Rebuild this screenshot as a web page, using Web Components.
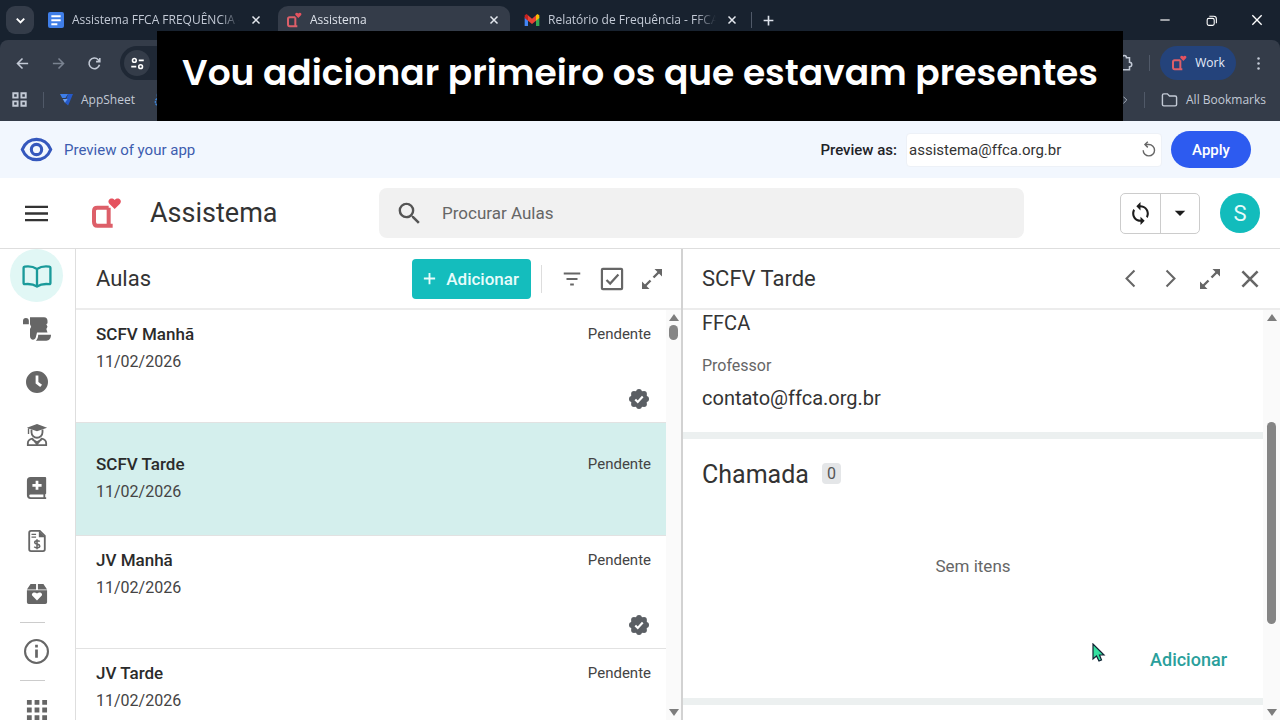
<!DOCTYPE html>
<html lang="pt-BR">
<head>
<meta charset="utf-8">
<title>Assistema</title>
<style>
    body {
        margin: 0;
        font-family: Roboto, "Liberation Sans", sans-serif;
        color: #333;
        background: #fff;
    }
</style>
</head>
<body>
<assistema-page></assistema-page>

<script>
// Inner markup of every icon, all drawn on a 24x24 grid
const ICONS = {
    chevronDown: '<path class="s" d="M6 9l6 6 6-6"/>',
    close: '<path class="s" d="M5 5l14 14M19 5L5 19"/>',
    plus: '<path class="s" d="M12 3v18M3 12h18"/>',
    minus: '<path class="s" d="M4 12h16"/>',
    restore: '<rect class="s" x="4" y="8" width="13" height="13" rx="3"/><path class="s" d="M8 4h8a5 5 0 0 1 5 5v8"/>',
    back: '<path class="s" d="M21 12H4M12 4l-8 8 8 8"/>',
    forward: '<path class="s" d="M3 12h17M12 4l8 8-8 8"/>',
    reload: '<path class="s" d="M20 14a8.500 8.500 0 1 1-2-8l2 2M20.500 3v6h-6"/>',
    tune: '<circle class="s" cx="7" cy="7" r="3"/><path class="s" d="M14 7h8M2 17h8"/><circle class="s" cx="17" cy="17" r="3"/>',
    puzzle: '<path class="s" d="M3 5h5a3 3 0 0 1 6 0h4v6a3 3 0 0 1 0 6v4H3z"/>',
    dots: '<circle cx="12" cy="4" r="2"/><circle cx="12" cy="12" r="2"/><circle cx="12" cy="20" r="2"/>',
    apps: '<path class="s" d="M2 2h7v7H2zM15 2h7v7h-7zM2 15h7v7H2zM15 15h7v7h-7z"/>',
    doubleChevron: '<path class="s" d="M3 4l8 8-8 8M13 4l8 8-8 8"/>',
    folder: '<path class="s" d="M2 6a2 2 0 0 1 2-2h5l3 3h8a2 2 0 0 1 2 2v10a2 2 0 0 1-2 2H4a2 2 0 0 1-2-2z"/>',
    docs: '<rect width="24" height="24" rx="3" fill="#3f7ee8"/><path fill="#fff" d="M5 5h14v3H5zM5 11h14v3H5zM5 17h9v3H5z"/>',
    gmail: '<path fill="#4285f4" d="M1 8v13h5V10z"/><path fill="#34a853" d="M23 8v13h-5V10z"/><path fill="#c5221f" d="M1 5v4l5 4V5L4 3z"/><path fill="#fbbc04" d="M23 5v4l-5 4V5l2-2z"/><path fill="#ea4335" d="M6 5l6 5 6-5v8l-6 5-6-5z"/>',
    appsheet: '<path fill="#3d7eea" d="M0 2h15l-5 7H4z"/><path fill="#2559c8" d="M15 2h9l-9 21-6-5z"/><path fill="#6aa0f5" d="M5 11h9l-5 7z"/>',
    gear: '<g stroke="#3f86d9"><circle class="s" cx="12" cy="15" r="7" stroke-dasharray="3 1"/><circle class="s" cx="12" cy="5" r="4"/></g>',
    logo: '<path fill="none" stroke="#dd5f69" stroke-width="3" stroke-linejoin="round" d="M14 8H5.500Q3 8 3 10.500v8Q3 21.500 5.500 21.500H17M14 8v13"/><path fill="#e5525f" d="M18.500 9l-4-4c-2.200-2.500 1.500-5.500 4-2.700 2.500-2.800 6.200.200 4 2.700z"/>',
    eye: '<path class="s" d="M1 12C5 1.500 19 1.500 23 12 19 22.500 5 22.500 1 12z"/><circle class="s" cx="12" cy="12" r="4"/>',
    undo: '<path class="s" d="M4.500 13a8 8 0 1 0 8-8H7"/><path class="s" d="M11 1L7 5l4 4"/>',
    menu: '<path class="s" d="M0 5h24M0 12h24M0 19h24"/>',
    search: '<path d="M15.500 14h-.79l-.28-.27A6.471 6.471 0 0 0 16 9.500 6.500 6.500 0 1 0 9.500 16c1.610 0 3.090-.59 4.230-1.570l.27.28v.79l5 4.990L20.490 19zm-6 0C7.010 14 5 11.990 5 9.500S7.010 5 9.500 5 14 7.010 14 9.500 11.990 14 9.500 14z"/>',
    sync: '<path transform="matrix(-1 0 0 1 24 0)" d="M12 6v3l4-4-4-4v3c-4.420 0-8 3.580-8 8 0 1.570.46 3.030 1.240 4.260L6.700 14.800c-.45-.83-.7-1.790-.7-2.800 0-3.310 2.690-6 6-6zm6.760 1.740L17.300 9.200c.44.84.7 1.790.7 2.800 0 3.310-2.690 6-6 6v-3l-4 4 4 4v-3c4.420 0 8-3.580 8-8 0-1.570-.46-3.030-1.240-4.260z"/>',
    caret: '<path d="M5 9h14l-7 7z"/>',
    book: '<path class="s" stroke-linejoin="round" d="M12 6C9 4 5 3.500 1.500 4Q.5 4.200.5 5v13q0 1.200 1 1c4-.5 7.500 0 10.500 2 3-2 6.500-2.500 10.500-2q1 .2 1-1V5q0-.8-1-1C19 3.500 15 4 12 6zM12 6v15"/>',
    scroll: '<path d="M0 8V5a2.500 2.500 0 0 1 5 0v3zM6 2h12c2 0 3 1.500 3 3v2l-1 1 1 2-1 2 1 3H12l-1 4c-.5 3-5 3-5-1v-6l1-2-1-2z"/><path d="M13 17h11c0 3-1.500 5-4 5h-9c1.500-1 2-3 2-5z"/>',
    clock: '<path fill-rule="evenodd" d="M12 0a12 12 0 1 0 0 24 12 12 0 0 0 0-24zM10.500 5h3v7l4 3-2 2.500-5-4z"/>',
    graduate: '<path d="M12 0L1 4l11 4 11-4zM2 5h1.500v6H2z"/><path class="s" d="M6 6v3a6 6 0 0 0 12 0V6M2 23v-2q0-4 5-5l5 6 5-6q5 1 5 5v2zM7 17l5 3 5-3"/>',
    medicalBook: '<path fill-rule="evenodd" d="M5 0h16a1 1 0 0 1 1 1v17l-1 1v3h1v2H5a4 4 0 0 1-4-4V4a4 4 0 0 1 4-4zM10.500 4v3.500H7v3h3.500V14h3v-3.500H17v-3h-3.500V4zM5 19a1.500 1.500 0 0 0 0 3h14v-3z"/>',
    invoice: '<path class="s" d="M3.500 3q0-2 2-2H15l5.500 5.500V21q0 2-2 2h-13q-2 0-2-2z"/><path d="M14 1v7h7zM6 4h5v1.500H6zM6 7h5v1.500H6z"/><path fill="none" stroke="currentColor" stroke-width="1.700" d="M15 12.500c-1-1-5.500-1.500-5.500 1s5.500 1.300 5.500 4-4.500 2.200-6 .8M12 10v11"/>',
    heartBox: '<path d="M5 1h6v6H1zM13 1h6l4 6H13z"/><path fill-rule="evenodd" d="M1 8h22v13q0 2-2 2H3q-2 0-2-2zM12 19l5-5c2-2.500-2-5.500-5-2.500-3-3-7 0-5 2.500z"/>',
    info: '<circle class="s" cx="12" cy="12" r="11"/><path d="M10.700 10h2.600v8h-2.600zM10.700 5.500h2.600v2.700h-2.600z"/>',
    grid: '<path d="M2 2h5v5H2zM10 2h5v5h-5zM18 2h5v5h-5zM2 10h5v5H2zM10 10h5v5h-5zM18 10h5v5h-5zM2 18h5v5H2zM10 18h5v5h-5zM18 18h5v5h-5z"/>',
    filter: '<path class="s" d="M3 6h18M6 12h12M10 18h4"/>',
    checkbox: '<rect class="s" x="1" y="1" width="22" height="22" rx="1"/><path class="s" d="M6 13l4 4 9-10"/>',
    // Double arrow with a gap in the middle of the shaft
    expand: '<path class="s" stroke-width="2.600" d="M13.500 10.500L19 5M10.500 13.500L5 19"/><path d="M14.500 2H22v7.500zM2 14.500V22h7.500z"/>',
    previous: '<path class="s" d="M17 2L7 12l10 10"/>',
    next: '<path class="s" d="M7 2l10 10L7 22"/>',
    verified: '<circle cx="12" cy="12" r="10"/><circle cx="12" cy="3.500" r="3.500"/><circle cx="18" cy="6" r="3.500"/><circle cx="20.500" cy="12" r="3.500"/><circle cx="18" cy="18" r="3.500"/><circle cx="12" cy="20.500" r="3.500"/><circle cx="6" cy="18" r="3.500"/><circle cx="3.500" cy="12" r="3.500"/><circle cx="6" cy="6" r="3.500"/><path fill="none" stroke="#fff" stroke-width="2.600" d="M7.500 12.500l3 3 6-6.500"/>'
};

// Shared by every element below: box sizing and bare buttons / links
const RESET = `
    *, :host { box-sizing: border-box; }
    button, a, input { font: inherit; color: inherit; }
    button { border: 0; padding: 0; background: none; cursor: pointer; display: flex; align-items: center; justify-content: center; }
    a { text-decoration: none; }
    h1, h2, p, ul, dl, dd { margin: 0; padding: 0; font-weight: 400; }
    ul { list-style: none; }
`;

function define(tag, render) {
    customElements.define(tag, class extends HTMLElement {
        constructor() {
            super();
            this.attachShadow({ mode: 'open' });
        }

        connectedCallback() {
            this.shadowRoot.innerHTML = `<style>${RESET}</style>${render(this)}`;
        }
    });
}

// <ui-icon name="close" size="16" weight="2">
define('ui-icon', (el) => {
    const size = el.getAttribute('size') || 24;
    return `
    <style>
        :host { display: inline-flex; flex: none; }
        svg { display: block; fill: currentColor; overflow: visible; }
        .s { fill: none; stroke: currentColor; stroke-width: ${el.getAttribute('weight') || 2}; }
        g[stroke] .s { stroke: inherit; }
    </style>
    <svg width="${size}" height="${size}" viewBox="0 0 24 24" aria-hidden="true">${ICONS[el.getAttribute('name')]}</svg>`;
});

define('browser-tab', (el) => `
    <style>
        :host { display: flex; align-items: center; gap: 8px; flex: 0 1 232px; min-width: 0; height: 34px; padding: 0 8px 6px; margin-top: 6px; color: #c3cad6; }
        :host([active]) { background: #343c49; color: #dde2ea; border-radius: 10px 10px 0 0; }
        .title { flex: 1; min-width: 0; justify-content: flex-start; overflow: hidden; white-space: nowrap; line-height: 20px; mask-image: linear-gradient(90deg, #000 88%, transparent); }
        .close { width: 16px; height: 16px; color: #e4e8ee; }
    </style>
    <ui-icon name="${el.getAttribute('icon')}" size="16"></ui-icon>
    <button class="title"><slot></slot></button>
    <button class="close" aria-label="Fechar guia"><ui-icon name="close" size="12" weight="3"></ui-icon></button>
`);

define('browser-chrome', () => `
    <style>
        :host { display: block; background: #18222f; font: 12px/20px "Segoe UI", "Open Sans", sans-serif; color: #c3cad6; }
        .row { display: flex; align-items: center; }
        .tabs { height: 40px; gap: 6px; padding-left: 6px; align-items: flex-start; }
        .pick { width: 28px; height: 28px; margin-top: 6px; border-radius: 9px; background: #343c49; color: #fff; }
        .sep { width: 1px; height: 16px; background: #505968; flex: none; }
        .tabs .sep { margin: 12px 0 0 -3px; }
        .tabs .new { width: 20px; height: 20px; margin-top: 10px; color: #dde2ea; }
        .window { display: flex; margin-left: auto; color: #fff; }
        .window button { width: 46px; height: 40px; }
        .panel { background: #343c49; border-radius: 8px 8px 0 0; }
        .tools { height: 46px; padding: 0 4px; }
        .tools > button { width: 36px; height: 36px; }
        .tools .off { color: #7a8391; }
        .address { flex: 1; height: 34px; margin: 0 24px 0 8px; padding: 0 4px; border-radius: 17px; background: #1f2835; display: flex; align-items: center; }
        .address button { width: 26px; height: 26px; border-radius: 50%; background: #343c49; color: #fff; }
        .tools .puzzle { width: 20px; margin-right: 14px; }
        .tools .profile { width: 76px; height: 34px; margin: 0 4px 0 10px; gap: 8px; border-radius: 17px; background: #24437b; color: #e6edfa; }
        .marks { height: 35px; padding: 0 14px 8px 12px; }
        .marks > * { flex: none; }
        .marks .sep { margin: 0 16px; }
        .marks a { display: flex; align-items: center; gap: 8px; }
        .marks a + a { margin-left: 17px; }
        .more { margin-left: auto; }
    </style>
    <div class="row tabs">
        <button class="pick" aria-label="Pesquisar guias"><ui-icon name="chevronDown" size="15" weight="3"></ui-icon></button>
        <browser-tab icon="docs">Assistema FFCA FREQUÊNCIA - </browser-tab>
        <browser-tab icon="logo" active>Assistema</browser-tab>
        <browser-tab icon="gmail">Relatório de Frequência - FFCA</browser-tab>
        <span class="sep"></span>
        <button class="new" aria-label="Nova guia"><ui-icon name="plus" size="13" weight="3"></ui-icon></button>
        <div class="window">
            <button aria-label="Minimizar"><ui-icon name="minus" size="14"></ui-icon></button>
            <button aria-label="Restaurar"><ui-icon name="restore" size="13"></ui-icon></button>
            <button aria-label="Fechar"><ui-icon name="close" size="16"></ui-icon></button>
        </div>
    </div>
    <div class="panel">
        <div class="row tools">
            <button aria-label="Voltar"><ui-icon name="back" size="15" weight="2.500"></ui-icon></button>
            <button class="off" aria-label="Avançar"><ui-icon name="forward" size="15" weight="2.500"></ui-icon></button>
            <button aria-label="Recarregar"><ui-icon name="reload" size="15" weight="2.500"></ui-icon></button>
            <div class="address">
                <button aria-label="Informações do site"><ui-icon name="tune" size="15" weight="2.500"></ui-icon></button>
            </div>
            <button class="puzzle" aria-label="Extensões"><ui-icon name="puzzle" size="18"></ui-icon></button>
            <span class="sep"></span>
            <button class="profile"><ui-icon name="logo" size="16"></ui-icon>Work</button>
            <button aria-label="Menu"><ui-icon name="dots" size="15"></ui-icon></button>
        </div>
        <nav class="row marks">
            <button aria-label="Apps"><ui-icon name="apps" size="15" weight="3"></ui-icon></button>
            <span class="sep"></span>
            <a href="#"><ui-icon name="appsheet" size="13"></ui-icon>AppSheet</a>
            <a href="#" aria-label="Configurações"><ui-icon name="gear" size="16"></ui-icon></a>
            <button class="more" aria-label="Mais favoritos"><ui-icon name="doubleChevron" size="10"></ui-icon></button>
            <span class="sep"></span>
            <a href="#"><ui-icon name="folder" size="17"></ui-icon>All Bookmarks</a>
        </nav>
    </div>
`);

define('preview-bar', () => `
    <style>
        :host { display: flex; align-items: center; height: 57px; padding: 0 29px 0 21px; background: #f2f7fe; font-size: 15px; line-height: 20px; }
        .eye { color: #3558bd; }
        p { margin-left: 12px; color: #3d5daf; }
        label { margin: 0 9px 0 auto; font-weight: 500; color: #1f2328; }
        .field { display: flex; align-items: center; width: 256px; height: 34px; margin-right: 9px; padding: 0 4px 0 2px; background: #fff; border: 1px solid #edf1f7; border-radius: 4px; }
        input { flex: 1; min-width: 0; border: 0; padding: 0; outline: 0; background: none; color: #333; }
        .field button { color: #666; }
        .apply { width: 80px; height: 37px; border-radius: 19px; background: #2d5bf0; color: #fff; font-weight: 500; }
    </style>
    <ui-icon class="eye" name="eye" size="31" weight="2.400"></ui-icon>
    <p>Preview of your app</p>
    <label for="user">Preview as:</label>
    <div class="field">
        <input id="user" type="text" value="assistema@ffca.org.br">
        <button aria-label="Redefinir"><ui-icon name="undo" size="17"></ui-icon></button>
    </div>
    <button class="apply">Apply</button>
`);

define('app-header', () => `
    <style>
        :host { display: flex; align-items: center; height: 71px; padding: 0 20px 0 25px; border-bottom: 1px solid #dedede; }
        .brand { display: flex; align-items: center; flex: 0 0 354px; }
        .brand ui-icon { margin: 0 28px 0 42px; }
        .brand button ui-icon { margin: 0; color: #333; }
        h1 { font-size: 27px; line-height: 32px; color: #333; }
        form { flex: 1; display: flex; align-items: center; height: 50px; margin-right: 96px; padding: 0 16px; gap: 18px; border-radius: 8px; background: #f1f1f1; color: #555; }
        input { flex: 1; min-width: 0; border: 0; padding: 0; outline: 0; background: none; font-size: 17px; }
        input::placeholder { color: #666; opacity: 1; }
        .group { display: flex; margin-right: 20px; border: 1px solid #ccc; border-radius: 5px; color: #1c1c1c; }
        .group button { width: 39px; height: 39px; }
        .group button + button { border-left: 1px solid #ccc; }
        .avatar { width: 40px; height: 40px; border-radius: 50%; background: #12bcbc; color: #e6fbfa; font-size: 22px; }
    </style>
    <div class="brand">
        <button aria-label="Menu"><ui-icon name="menu" size="23" weight="2.400"></ui-icon></button>
        <ui-icon name="logo" size="32"></ui-icon>
        <h1>Assistema</h1>
    </div>
    <form role="search">
        <ui-icon name="search" size="29"></ui-icon>
        <input type="search" placeholder="Procurar Aulas" aria-label="Procurar Aulas">
    </form>
    <div class="group">
        <button aria-label="Sincronizar"><ui-icon name="sync" size="25"></ui-icon></button>
        <button aria-label="Opções de sincronização"><ui-icon name="caret" size="18"></ui-icon></button>
    </div>
    <button class="avatar">S</button>
`);

// Icon, accessible name and drawn size of each view in the left rail
const VIEWS = [
    ['book', 'Aulas', 28], ['scroll', 'Relatórios', 28], ['clock', 'Horários', 22], ['graduate', 'Alunos', 22],
    ['medicalBook', 'Saúde', 22], ['invoice', 'Financeiro', 22], ['heartBox', 'Doações', 22],
    null, ['info', 'Sobre', 25], null, ['grid', 'Mais', 23]
];

define('nav-rail', () => `
    <style>
        :host { display: flex; flex-direction: column; width: 76px; border-right: 1px solid #dedede; overflow: hidden; color: #666; }
        a { flex: none; display: flex; align-items: center; justify-content: center; width: 73px; height: 53px; }
        a:first-of-type { width: 53px; margin-left: 10px; border-radius: 50%; background: #e1f7f5; color: #1a9a9a; }
        hr { flex: none; width: 25px; height: 1px; margin: 2px 0 2px 20px; border: 0; background: #ccc; }
    </style>
    ${VIEWS.map((view) => view
        ? `<a href="#" aria-label="${view[1]}"><ui-icon name="${view[0]}" size="${view[2]}"></ui-icon></a>`
        : '<hr>').join('')}
`);

// start and size are shares of the track, in percent
define('scroll-track', (el) => `
    <style>
        :host { display: flex; flex: none; flex-direction: column; align-items: center; width: 15px; padding: 4px 0; background: #fafafa; }
        i { border: 5px solid transparent; border-top-width: 0; border-bottom: 7px solid #7d7d7d; }
        i:last-child { border-top: 7px solid #7d7d7d; border-bottom-width: 0; }
        .track { flex: 1; width: 9px; }
        .before { height: ${el.getAttribute('start')}%; }
        .thumb { height: ${el.getAttribute('size')}%; border-radius: 5px; background: #858585; }
    </style>
    <i></i>
    <div class="track"><div class="before"></div><div class="thumb"></div></div>
    <i></i>
`);

define('pane-header', () => `
    <style>
        :host { display: flex; flex: none; align-items: center; height: 61px; border-bottom: 2px solid #ececec; color: #666; }
        h2 { margin-right: auto; font-size: 22px; line-height: 28px; color: #333; }
    </style>
    <h2><slot></slot></h2>
    <slot name="actions"></slot>
`);

define('class-card', (el) => `
    <style>
        :host { display: flex; flex-direction: column; justify-content: center; min-height: 113px; padding: 0 15px 2px 20px; border-bottom: 1px solid #e2e2e2; font-size: 16px; line-height: 28px; color: #444; }
        :host([selected]) { background: #d4efed; }
        .top { display: flex; justify-content: space-between; }
        a { font-size: 17px; font-weight: 500; color: #2b2b2b; }
        .status { font-size: 15px; }
        .foot { display: flex; justify-content: flex-end; margin-top: 11px; }
        .foot button { width: 24px; height: 24px; color: #5b5f64; }
    </style>
    <div class="top"><a href="#"><slot></slot></a><span class="status">${el.getAttribute('status')}</span></div>
    <time>${el.getAttribute('date')}</time>
    ${el.hasAttribute('done') ? '<div class="foot"><button aria-label="Concluir aula"><ui-icon name="verified" size="20"></ui-icon></button></div>' : ''}
`);

define('class-list', () => `
    <style>
        :host { display: flex; flex-direction: column; flex: none; width: 50%; max-width: 605px; min-width: 0; }
        .tool { width: 40px; height: 40px; }
        .add { height: 40px; padding: 0 12px 0 10px; gap: 9px; border-radius: 4px; background: #14bdbd; color: #e8fcfb; font-size: 17px; font-weight: 500; }
        .line { width: 1px; height: 28px; margin: 0 10px; background: #ddd; }
        pane-header { padding: 0 9px 0 20px; }
        .body { flex: 1; display: flex; min-height: 0; }
        .cards { flex: 1; overflow: hidden; }
    </style>
    <pane-header>Aulas
        <button class="add" slot="actions"><ui-icon name="plus" size="15" weight="3"></ui-icon>Adicionar</button>
        <span class="line" slot="actions"></span>
        <button class="tool" slot="actions" aria-label="Filtrar"><ui-icon name="filter" size="22"></ui-icon></button>
        <button class="tool" slot="actions" aria-label="Selecionar"><ui-icon name="checkbox" size="22" weight="2.400"></ui-icon></button>
        <button class="tool" slot="actions" aria-label="Expandir"><ui-icon name="expand" size="24" weight="2.400"></ui-icon></button>
    </pane-header>
    <div class="body">
        <ul class="cards">
            <li><class-card status="Pendente" date="11/02/2026" done>SCFV Manhã</class-card></li>
            <li><class-card status="Pendente" date="11/02/2026" selected>SCFV Tarde</class-card></li>
            <li><class-card status="Pendente" date="11/02/2026" done>JV Manhã</class-card></li>
            <li><class-card status="Pendente" date="11/02/2026" done>JV Tarde</class-card></li>
        </ul>
        <scroll-track start="1" size="4"></scroll-track>
    </div>
`);

define('class-detail', () => `
    <style>
        :host { display: flex; flex: 1; flex-direction: column; min-width: 0; border-left: 2px solid #d2d2d2; }
        .tool { width: 40px; height: 40px; }
        pane-header { padding: 0 10px 0 19px; }
        .body { flex: 1; display: flex; min-height: 0; }
        .sections { flex: 1; overflow: hidden; background: #ecf0f0; }
        section { margin-bottom: 7px; padding: 0 19px; background: #fff; }
        .facts { padding-bottom: 20px; }
        dd { font-size: 20px; line-height: 27px; color: #333; }
        dt { margin: 19px 0 9px; font-size: 16px; line-height: 20px; color: #666; }
        .calls { display: flex; flex-direction: column; padding: 20px 19px 22px; }
        .heading { display: flex; align-items: center; gap: 13px; }
        h2 { font-size: 25px; line-height: 32px; color: #333; }
        .count { margin-bottom: 4px; padding: 0 5px; border-radius: 4px; background: #e4e6e8; font-size: 16px; line-height: 21px; color: #555; }
        .empty { padding: 65px 0 68px; text-align: center; font-size: 17px; line-height: 20px; color: #666; }
        .calls a { align-self: flex-end; margin-right: 17px; font-size: 18px; line-height: 32px; font-weight: 500; color: #2a9f9c; }
        .next { height: 40px; margin: 0; }
        scroll-track { width: 17px; }
    </style>
    <pane-header>SCFV Tarde
        <button class="tool" slot="actions" aria-label="Anterior"><ui-icon name="previous" size="19" weight="2.600"></ui-icon></button>
        <button class="tool" slot="actions" aria-label="Próximo"><ui-icon name="next" size="19" weight="2.600"></ui-icon></button>
        <button class="tool" slot="actions" aria-label="Expandir"><ui-icon name="expand" size="24" weight="2.400"></ui-icon></button>
        <button class="tool" slot="actions" aria-label="Fechar"><ui-icon name="close" size="26" weight="2.400"></ui-icon></button>
    </pane-header>
    <div class="body">
        <div class="sections">
            <section class="facts">
                <dl>
                    <dd>FFCA</dd>
                    <dt>Professor</dt>
                    <dd>contato@ffca.org.br</dd>
                </dl>
            </section>
            <section class="calls">
                <div class="heading"><h2>Chamada</h2><span class="count">0</span></div>
                <p class="empty">Sem itens</p>
                <a href="#">Adicionar</a>
            </section>
            <section class="next"></section>
        </div>
        <scroll-track start="26" size="52"></scroll-track>
    </div>
`);

// Caption strip laid over the browser bars
define('video-caption', () => `
    <style>
        :host { position: absolute; top: 31px; left: 0; right: 0; display: flex; justify-content: center; pointer-events: none; }
        p { padding: 0 25px 6px; background: #000; color: #fff; font: 600 36px/84px Poppins, Inter, sans-serif; white-space: nowrap; }
    </style>
    <p><slot></slot></p>
`);

define('mouse-pointer', () => `
    <style>
        :host { position: absolute; left: 1092px; top: 643px; pointer-events: none; }
        svg { display: block; }
    </style>
    <svg width="14" height="20" viewBox="0 0 14 20" aria-hidden="true">
        <path fill="#35e0a0" stroke="#123" stroke-width="1.200" d="M1 1v15l3.500-3 2.500 5 2.500-1-2-5H12z"/>
    </svg>
`);

define('assistema-page', () => `
    <style>
        :host { position: relative; display: flex; flex-direction: column; height: 100vh; overflow: hidden; }
        main { flex: 1; display: flex; min-height: 0; }
    </style>
    <browser-chrome></browser-chrome>
    <preview-bar></preview-bar>
    <app-header></app-header>
    <main>
        <nav-rail></nav-rail>
        <class-list></class-list>
        <class-detail></class-detail>
    </main>
    <video-caption>Vou adicionar primeiro os que estavam presentes</video-caption>
    <mouse-pointer></mouse-pointer>
`);
</script>
</body>
</html>
